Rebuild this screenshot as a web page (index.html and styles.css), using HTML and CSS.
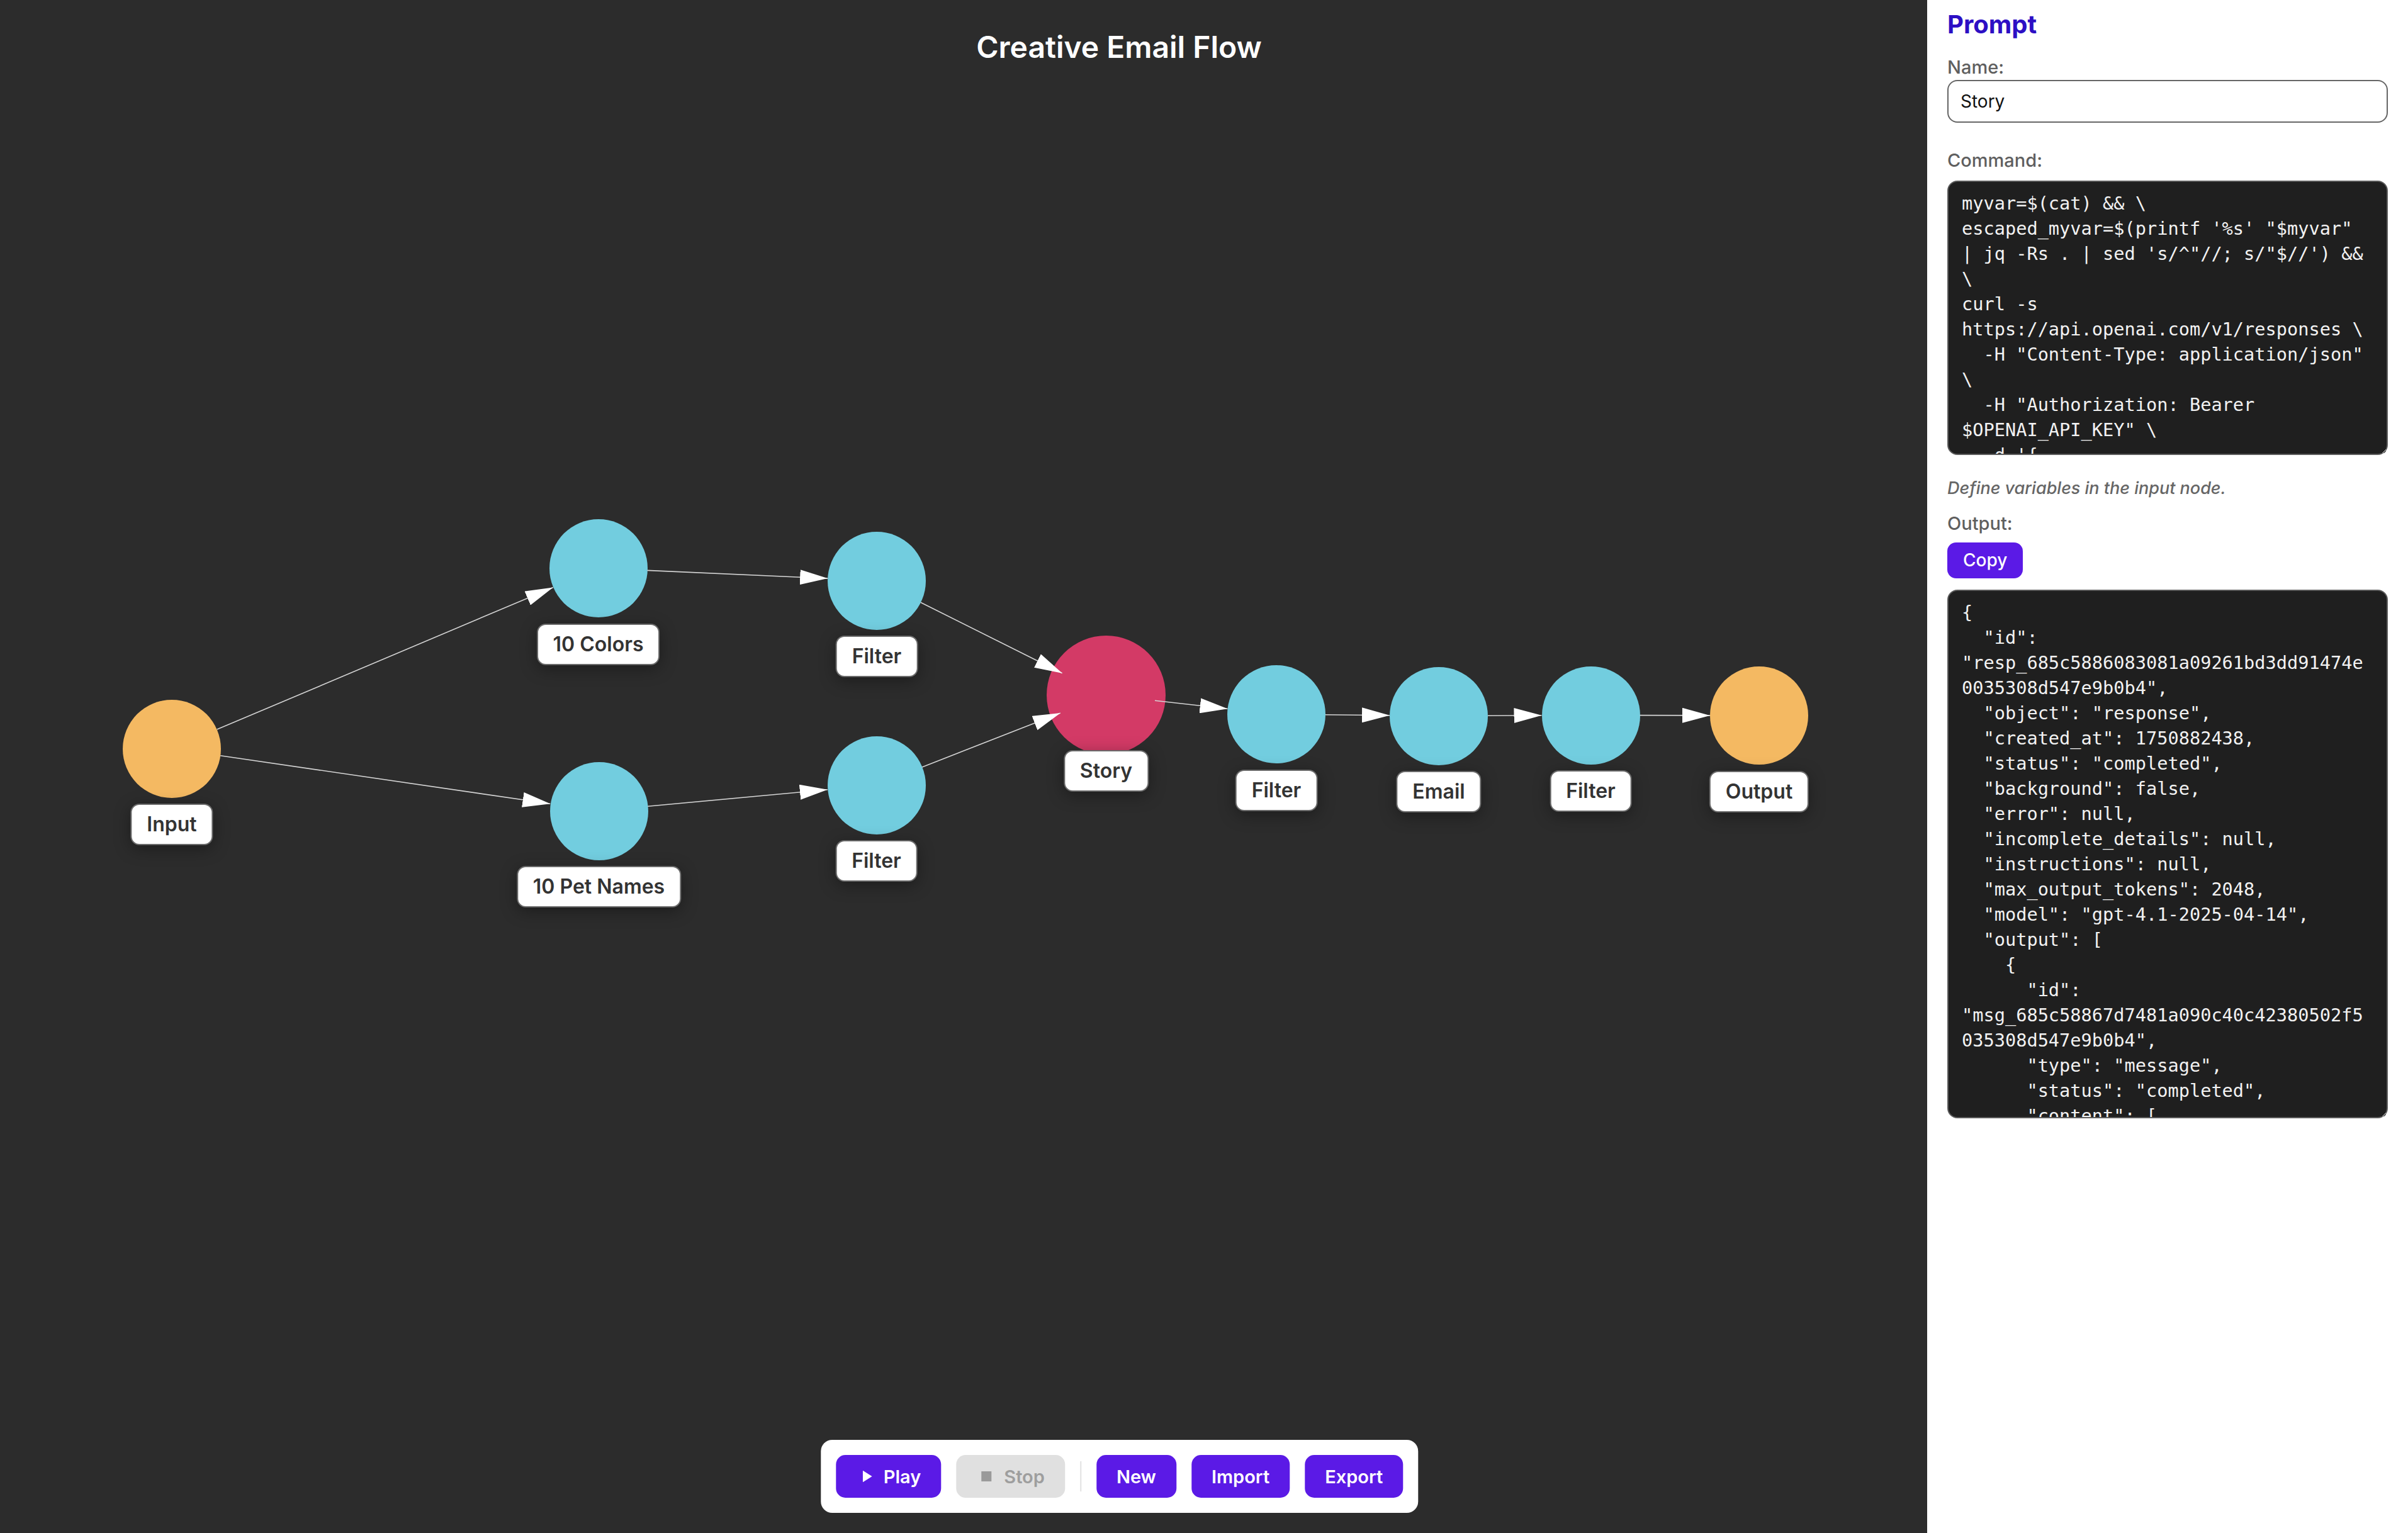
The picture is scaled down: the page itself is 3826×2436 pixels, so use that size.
FILE: index.html
```html
<!DOCTYPE html>
<html lang="en">
<head>
<meta charset="utf-8">
<title>Creative Email Flow</title>
<link rel="stylesheet" href="styles.css">
</head>
<body>
<div class="app">
  <main class="canvas">
    <h1 class="title">Creative Email Flow</h1>

    <div class="node" style="left:273px; top:1189.5px"><div class="dot orange"></div><div class="label">Input</div></div>
    <div class="node" style="left:950.5px; top:903px"><div class="dot cyan"></div><div class="label">10 Colors</div></div>
    <div class="node" style="left:951.5px; top:1288.5px"><div class="dot cyan"></div><div class="label">10 Pet Names</div></div>
    <div class="node" style="left:1393px; top:922.5px"><div class="dot cyan"></div><div class="label">Filter</div></div>
    <div class="node" style="left:1392.5px; top:1247.5px"><div class="dot cyan"></div><div class="label">Filter</div></div>
    <div class="node" style="left:1757.5px; top:1104.5px"><div class="dot red big"></div><div class="label">Story</div></div>
    <div class="node" style="left:2028px; top:1135px"><div class="dot cyan"></div><div class="label">Filter</div></div>
    <div class="node" style="left:2286px; top:1137.5px"><div class="dot cyan"></div><div class="label">Email</div></div>
    <div class="node" style="left:2527.5px; top:1136.5px"><div class="dot cyan"></div><div class="label">Filter</div></div>
    <div class="node" style="left:2795px; top:1137px"><div class="dot orange"></div><div class="label">Output</div></div>

    <svg class="edges" width="3062" height="2436" viewBox="0 0 3062 2436">
      <defs>
        <marker id="arrow" markerUnits="userSpaceOnUse" markerWidth="44" markerHeight="24" refX="44" refY="12" orient="auto">
          <path d="M0,0 L44,12 L0,24 z" fill="#ffffff"/>
        </marker>
      </defs>
      <g class="edge-lines">
        <line x1="344.8" y1="1159.1" x2="878.7" y2="933.4" marker-end="url(#arrow)"/>
        <line x1="350.2" y1="1200.8" x2="874.3" y2="1277.2" marker-end="url(#arrow)"/>
        <line x1="1028.4" y1="906.4" x2="1315.1" y2="919.1" marker-end="url(#arrow)"/>
        <line x1="1029.2" y1="1281.3" x2="1314.8" y2="1254.7" marker-end="url(#arrow)"/>
        <line x1="1462.8" y1="957.3" x2="1687.7" y2="1069.7" marker-end="url(#arrow)"/>
        <line x1="1465.1" y1="1219.0" x2="1684.9" y2="1133.0" marker-end="url(#arrow)"/>
        <line x1="1835.0" y1="1113.2" x2="1950.5" y2="1126.3" marker-end="url(#arrow)"/>
        <line x1="2106" y1="1135.8" x2="2208" y2="1136.7" marker-end="url(#arrow)"/>
        <line x1="2364" y1="1137.2" x2="2449.5" y2="1136.8" marker-end="url(#arrow)"/>
        <line x1="2605.5" y1="1136.6" x2="2717" y2="1136.9" marker-end="url(#arrow)"/>
      </g>
    </svg>

    <div class="toolbar">
      <button class="tbtn primary"><svg class="ico" viewBox="0 0 24 24"><path d="M8 5v14l11-7z"/></svg><span>Play</span></button>
      <button class="tbtn disabled"><svg class="ico" viewBox="0 0 24 24"><path d="M6 6h12v12H6z"/></svg><span>Stop</span></button>
      <span class="divider"></span>
      <button class="tbtn primary"><span>New</span></button>
      <button class="tbtn primary"><span>Import</span></button>
      <button class="tbtn primary"><span>Export</span></button>
    </div>
  </main>

  <aside class="panel">
    <h2 class="panel-title">Prompt</h2>
    <label class="field-label name-label" for="node-name">Name:</label>
    <input id="node-name" class="text-input" type="text" value="Story">
    <label class="field-label cmd-label" for="node-cmd">Command:</label>
    <textarea id="node-cmd" class="code cmd-code" readonly spellcheck="false">myvar=$(cat) &amp;&amp; \
escaped_myvar=$(printf '%s' "$myvar" | jq -Rs . | sed 's/^"//; s/"$//') &amp;&amp; \
curl -s https://api.openai.com/v1/responses \
  -H "Content-Type: application/json" \
  -H "Authorization: Bearer $OPENAI_API_KEY" \
  -d '{
    "model": "gpt-4.1",
    "input": "Write a short story using: '"$escaped_myvar"'"
  }'</textarea>
    <p class="hint">Define variables in the input node.</p>
    <label class="field-label out-label">Output:</label>
    <div class="copy-row"><button class="copy-btn">Copy</button></div>
    <textarea class="code out-code" readonly spellcheck="false">{
  "id": "resp_685c5886083081a09261bd3dd91474e0035308d547e9b0b4",
  "object": "response",
  "created_at": 1750882438,
  "status": "completed",
  "background": false,
  "error": null,
  "incomplete_details": null,
  "instructions": null,
  "max_output_tokens": 2048,
  "model": "gpt-4.1-2025-04-14",
  "output": [
    {
      "id": "msg_685c58867d7481a090c40c42380502f5035308d547e9b0b4",
      "type": "message",
      "status": "completed",
      "content": [
        {
          "type": "output_text",
          "annotations": [],
          "text": "Once upon a time..."
        }
      ],
      "role": "assistant"
    }
  ]
}</textarea>
  </aside>
</div>
</body>
</html>
```
FILE: styles.css
```css
* { box-sizing: border-box; }

html, body {
  margin: 0;
  padding: 0;
  width: 3826px;
  height: 2436px;
  overflow: hidden;
  font-family: Inter, "Noto Sans", "Liberation Sans", sans-serif;
}

.app {
  display: flex;
  width: 3826px;
  height: 2436px;
}

/* ---------- canvas ---------- */
.canvas {
  position: relative;
  flex: 0 0 3062px;
  height: 100%;
  background: #2c2c2c;
  overflow: hidden;
}

.title {
  position: absolute;
  left: 1778px;
  top: 45px;
  transform: translateX(-50%);
  margin: 0;
  font-size: 48px;
  line-height: 60px;
  font-weight: 600;
  color: #ffffff;
  white-space: nowrap;
}

.node {
  position: absolute;
  width: 0;
  height: 0;
}

.dot {
  position: absolute;
  left: -78px;
  top: -78px;
  width: 156px;
  height: 156px;
  border-radius: 50%;
}
.dot.big {
  left: -94.5px;
  top: -94.5px;
  width: 189px;
  height: 189px;
}
.dot.cyan { background: #72cddf; }
.dot.orange { background: #f4b962; }
.dot.red { background: #d33a66; }

.label {
  position: absolute;
  top: 87.5px;
  left: 0;
  transform: translateX(-50%);
  white-space: nowrap;
  background: #ffffff;
  border: 2px solid #6a6a6a;
  border-radius: 14px;
  padding: 12px 24px;
  font-size: 32px;
  line-height: 38px;
  font-weight: 600;
  color: #333333;
  box-shadow: 0 6px 26px rgba(0, 0, 0, 0.35);
}

.edges {
  position: absolute;
  left: 0;
  top: 0;
  pointer-events: none;
}
.edge-lines line {
  stroke: #d4d4d4;
  stroke-width: 1.6;
}

/* ---------- toolbar ---------- */
.toolbar {
  position: absolute;
  left: 1778.5px;
  bottom: 32px;
  transform: translateX(-50%);
  display: flex;
  align-items: center;
  gap: 24px;
  padding: 24px;
  background: #ffffff;
  border-radius: 18px;
}

.tbtn {
  display: flex;
  align-items: center;
  gap: 12px;
  height: 68px;
  padding: 0 32px;
  border: none;
  border-radius: 15px;
  font-family: inherit;
  font-size: 29px;
  font-weight: 600;
  white-space: nowrap;
}
.tbtn.primary {
  background: #5b1ae6;
  color: #ffffff;
}
.tbtn.disabled {
  background: #e0e0e0;
  color: #9e9e9e;
}
.ico {
  width: 32px;
  height: 32px;
  fill: currentColor;
  flex: 0 0 32px;
}
.tbtn.disabled .ico { fill: #9a9a9a; }

.divider {
  width: 2px;
  height: 48px;
  background: #e2e2e2;
}

/* ---------- panel ---------- */
.panel {
  flex: 1 1 auto;
  height: 100%;
  background: #ffffff;
  padding: 14.5px 32px 0 32px;
  display: flex;
  flex-direction: column;
  align-items: stretch;
}

.panel-title {
  margin: 0;
  font-size: 40px;
  line-height: 48px;
  font-weight: 700;
  color: #2d0fc4;
}

.field-label {
  display: block;
  font-size: 29px;
  line-height: 34px;
  font-weight: 500;
  color: #5f5f5f;
}
.name-label { margin-top: 27px; }
.cmd-label { margin-top: 43px; }
.out-label { margin-top: 23px; }

.text-input {
  margin-top: 3px;
  height: 68px;
  width: 700px;
  border: 2px solid #666666;
  border-radius: 16px;
  padding: 0 19px;
  font-family: inherit;
  font-size: 28px;
  color: #111111;
  background: #ffffff;
  outline: none;
}

.code {
  display: block;
  width: 700px;
  margin: 0;
  background: #1f1f1f;
  color: #f2f2f2;
  border: 2px solid #5c5c5c;
  border-radius: 16px;
  padding: 14px 30px 14px 21px;
  font-family: "DejaVu Sans Mono", "Liberation Mono", monospace;
  font-size: 28.64px;
  line-height: 40px;
  white-space: pre-wrap;
  overflow-wrap: break-word;
  overflow: hidden;
  resize: vertical;
  outline: none;
}
.cmd-code {
  margin-top: 15px;
  height: 436px;
}
.out-code {
  margin-top: 18px;
  height: 840px;
}

.hint {
  margin: 36px 0 0 0;
  font-size: 27px;
  line-height: 33px;
  font-style: italic;
  font-weight: 500;
  color: #666666;
}

.copy-row {
  display: flex;
  margin-top: 13px;
}
.copy-btn {
  height: 57px;
  padding: 0 25px;
  border: none;
  border-radius: 14px;
  background: #5b1ae6;
  color: #ffffff;
  font-family: inherit;
  font-size: 28px;
  font-weight: 500;
}
```
